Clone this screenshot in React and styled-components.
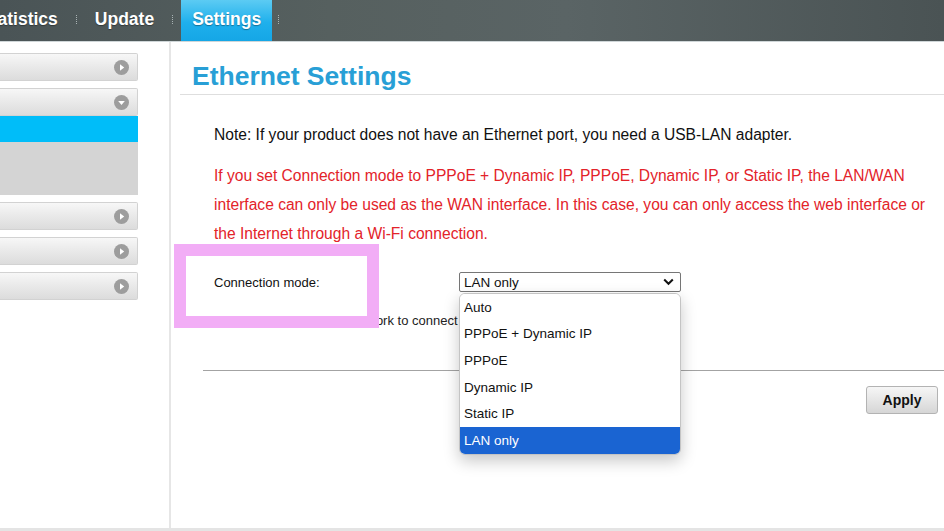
import React from 'react';
import styled, { createGlobalStyle } from 'styled-components';

const GlobalStyle = createGlobalStyle`
  html, body {
    margin: 0;
    padding: 0;
    background: #ffffff;
    font-family: "Liberation Sans", Arial, sans-serif;
    overflow: hidden;
  }
`;

const Page = styled.div`
  width: 944px;
  height: 531px;
  overflow: hidden;
  background: #fff;
`;

const TopBar = styled.div`
  height: 42px;
  display: flex;
  align-items: stretch;
  background: linear-gradient(90deg, #4a5456 0%, #56605f 35%, #5a6465 60%, #4a5354 100%);
  border-bottom: 1px solid #cfd6d8;
  box-sizing: border-box;
`;

const Tab = styled.div`
  display: flex;
  align-items: center;
  padding: ${(p) => (p.$active ? '0 11px' : '0 18px')};
  margin: ${(p) => (p.$active ? '0 6px 0 8px' : '0')};
  margin-left: ${(p) => (p.$shift ? `${p.$shift}px` : undefined)};
  font-size: 17.5px;
  font-weight: bold;
  color: #ffffff;
  text-shadow: 0 1px 1px rgba(0, 0, 0, 0.35);
  background: ${(p) =>
    p.$active ? 'linear-gradient(180deg, #5ccbf3 0%, #1fb0ec 55%, #15a6e6 100%)' : 'transparent'};
  padding-bottom: 2px;
`;

const Sep = styled.span`
  align-self: center;
  width: 0;
  height: 9px;
  border-left: 1px dotted #a9b3b4;
  margin-bottom: 2px;
`;

const Body = styled.div`
  display: flex;
  height: 486px;
  border-bottom: 3px solid #e4e4e4;
`;

const Sidebar = styled.div`
  width: 169px;
  flex-shrink: 0;
  border-right: 2px solid #e6e6e6;
  padding-top: 11px;
  display: flex;
  flex-direction: column;
  gap: 7px;
`;

const MenuItem = styled.div`
  width: 138px;
  height: 28px;
  box-sizing: border-box;
  display: flex;
  align-items: center;
  justify-content: flex-end;
  padding-right: 8px;
  background: linear-gradient(180deg, #f7f7f7 0%, #e9e9e9 50%, #dcdcdc 100%);
  border: 1px solid #d2d2d2;
  border-left: none;
  border-radius: 0 2px 2px 0;
`;

const SubMenu = styled.div`
  width: 138px;
  display: flex;
  flex-direction: column;
`;

const SubActive = styled.div`
  height: 26px;
  background: #00bdf9;
`;

const SubRest = styled.div`
  height: 53px;
  background: #d4d4d4;
`;

const Arrow = ({ down }) => (
  <svg width="15" height="15" viewBox="0 0 15 15">
    <circle cx="7.5" cy="7.5" r="7.5" fill="#9d9d9d" />
    {down ? (
      <path d="M4.2 6 L10.8 6 L7.5 10 Z" fill="#fff" />
    ) : (
      <path d="M6 4.2 L10.2 7.5 L6 10.8 Z" fill="#fff" />
    )}
  </svg>
);

const Main = styled.div`
  flex: 1;
  position: relative;
`;

const TitleBar = styled.div`
  margin: 19px 0 0 9px;
  padding: 0 0 3px 12px;
  border-bottom: 1px solid #dedede;
`;

const Title = styled.h1`
  margin: 0;
  font-size: 26.5px;
  line-height: 30px;
  font-weight: bold;
  color: #289fd6;
`;

const Content = styled.div`
  padding: 25px 9px 0 43px;
`;

const Note = styled.p`
  margin: 0;
  font-size: 15.6px;
  line-height: 29px;
  color: #111;
`;

const Warning = styled.p`
  margin: 12px 0 0;
  font-size: 15.6px;
  line-height: 29px;
  color: #e3232a;
`;

const FormRow = styled.div`
  margin-top: 24px;
  display: flex;
  align-items: center;
  height: 20px;
`;

const Label = styled.div`
  width: 245px;
  font-size: 13px;
  color: #111;
`;

const SelectWrap = styled.div`
  position: relative;
  width: 222px;
`;

const SelectBox = styled.div`
  height: 20px;
  box-sizing: border-box;
  border: 1px solid #767676;
  border-radius: 2px;
  display: flex;
  align-items: center;
  justify-content: space-between;
  padding: 0 6px 0 4px;
  font-size: 13.5px;
  color: #111;
  background: #fff;
`;

const OptionList = styled.div`
  position: absolute;
  top: 21px;
  left: 0;
  width: 222px;
  box-sizing: border-box;
  background: #fff;
  border: 1px solid #c4c4c4;
  border-radius: 6px;
  box-shadow: 0 6px 16px rgba(0, 0, 0, 0.22);
  overflow: hidden;
  z-index: 3;
`;

const Option = styled.div`
  height: 26.6px;
  display: flex;
  align-items: center;
  padding-left: 4px;
  font-size: 13.5px;
  color: ${(p) => (p.$selected ? '#fff' : '#111')};
  background: ${(p) => (p.$selected ? '#1a64d2' : '#fff')};
`;

const Hint = styled.div`
  margin-top: 19px;
  font-size: 13px;
  line-height: 20px;
  color: #222;
`;

const Rule = styled.hr`
  margin: 39px 0 0 32px;
  border: none;
  border-top: 1px solid #a3a3a3;
`;

const ButtonRow = styled.div`
  display: flex;
  justify-content: flex-end;
  padding: 15px 6px 0 0;
`;

const ApplyButton = styled.button`
  width: 72px;
  height: 28px;
  font-family: "Liberation Sans", Arial, sans-serif;
  font-size: 14px;
  font-weight: bold;
  color: #111;
  background: linear-gradient(180deg, #f6f6f6 0%, #e6e6e6 50%, #d6d6d6 100%);
  border: 1px solid #b3b3b3;
  border-radius: 3px;
`;

const PinkMark = styled.div`
  position: absolute;
  left: 3px;
  top: 202px;
  width: 205px;
  height: 84px;
  box-sizing: border-box;
  border: 12px solid #f2adf6;
  z-index: 2;
`;

const Chevron = () => (
  <svg width="11" height="8" viewBox="0 0 11 8">
    <path d="M1.2 1.5 L5.5 5.8 L9.8 1.5" fill="none" stroke="#111" strokeWidth="2" />
  </svg>
);

const options = ['Auto', 'PPPoE + Dynamic IP', 'PPPoE', 'Dynamic IP', 'Static IP', 'LAN only'];

export default function App() {
  return (
    <Page>
      <GlobalStyle />
      <TopBar>
        <Tab $shift={-38}>Statistics</Tab>
        <Sep />
        <Tab>Update</Tab>
        <Sep />
        <Tab $active>Settings</Tab>
        <Sep />
      </TopBar>
      <Body>
        <Sidebar>
          <MenuItem>
            <Arrow />
          </MenuItem>
          <SubMenu>
            <MenuItem>
              <Arrow down />
            </MenuItem>
            <SubActive />
            <SubRest />
          </SubMenu>
          <MenuItem>
            <Arrow />
          </MenuItem>
          <MenuItem>
            <Arrow />
          </MenuItem>
          <MenuItem>
            <Arrow />
          </MenuItem>
        </Sidebar>
        <Main>
          <TitleBar>
            <Title>Ethernet Settings</Title>
          </TitleBar>
          <Content>
            <Note>Note: If your product does not have an Ethernet port, you need a USB-LAN adapter.</Note>
            <Warning>
              If you set Connection mode to PPPoE + Dynamic IP, PPPoE, Dynamic IP, or Static IP, the LAN/WAN
              interface can only be used as the WAN interface. In this case, you can only access the web interface or
              the Internet through a Wi-Fi connection.
            </Warning>
            <FormRow>
              <Label>Connection mode:</Label>
              <SelectWrap>
                <SelectBox>
                  <span>LAN only</span>
                  <Chevron />
                </SelectBox>
                <OptionList>
                  {options.map((o) => (
                    <Option key={o} $selected={o === 'LAN only'}>
                      {o}
                    </Option>
                  ))}
                </OptionList>
              </SelectWrap>
            </FormRow>
            <Hint>Configure the Ethernet network to connect automatically.</Hint>
          </Content>
          <Rule />
          <ButtonRow>
            <ApplyButton type="button">Apply</ApplyButton>
          </ButtonRow>
          <PinkMark />
        </Main>
      </Body>
    </Page>
  );
}
